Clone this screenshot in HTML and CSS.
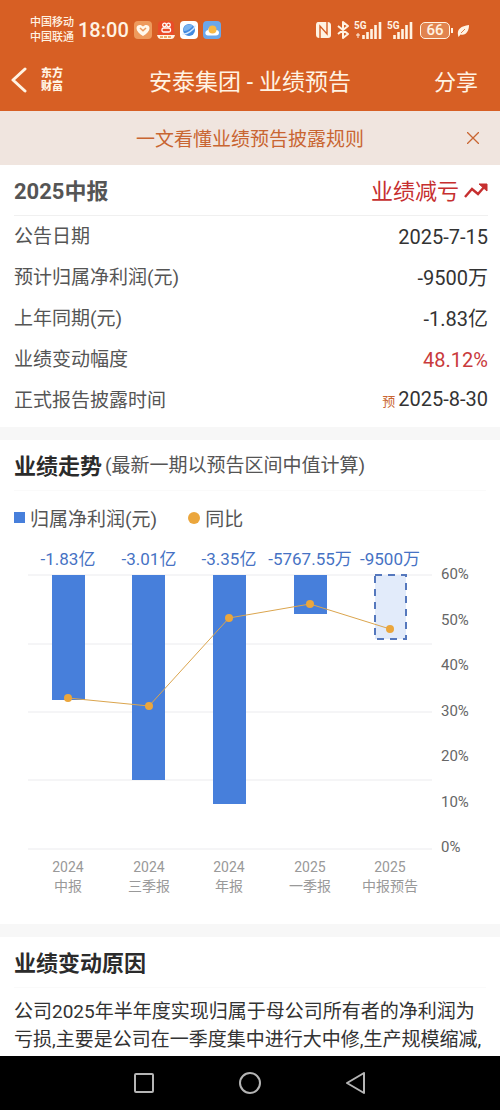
FILE: index.html
```html
<!DOCTYPE html>
<html lang="zh-CN">
<head>
    <meta charset="UTF-8">
    <meta name="viewport" content="width=device-width, initial-scale=1.0">
    <title>安泰集团 - 业绩预告</title>
    <link rel="stylesheet" href="styles.css">
</head>
<body>
    <header class="header">
        <div class="status">
            <div class="carriers">
                <span>中国移动</span>
                <span>中国联通</span>
            </div>
            <span class="clock">18:00</span>
            <div class="apps">
                <svg width="18" height="18" viewBox="0 0 18 18">
                    <rect width="18" height="18" rx="4" fill="#ee9a5c"/>
                    <path d="M9 15C5 12.500 2.500 10 2.500 7.200C2.500 3.600 7 2.800 9 5.600C11 2.800 15.500 3.600 15.500 7.200C15.500 10 13 12.500 9 15Z" fill="#fff8ec"/>
                    <path d="M6 7L9 9.800L12 7" fill="none" stroke="#ee9a5c" stroke-width="1.500"/>
                </svg>
                <svg width="18" height="18" viewBox="0 0 18 18">
                    <rect x="1" width="16" height="17" rx="4" fill="#ea4c28"/>
                    <circle cx="7.500" cy="4" r="1.800" fill="none" stroke="#fff" stroke-width="1.300"/>
                    <circle cx="11.500" cy="4" r="1.800" fill="none" stroke="#fff" stroke-width="1.300"/>
                    <rect x="5" y="7" width="8.500" height="4" rx="1.500" fill="none" stroke="#fff" stroke-width="1.300"/>
                    <path d="M0 14H18C17 17 16 18 14 18H4C2 18 1 17 0 14Z" fill="#fff3e3"/>
                    <path d="M3 16H15" stroke="#e8923f" stroke-width="1.500" stroke-dasharray="3 1"/>
                </svg>
                <svg width="18" height="18" viewBox="0 0 18 18">
                    <rect width="18" height="18" rx="4" fill="#fff"/>
                    <circle cx="9" cy="9" r="6" fill="#438ae0"/>
                    <path d="M3.500 10C7 10 11 8 13 4.500C8 1.500 3 5 3.500 10Z" fill="#79b4f0"/>
                    <path d="M2.500 13C7 13.500 14 9 15.500 4.500" fill="none" stroke="#d5e9ff" stroke-width="1.300"/>
                </svg>
                <svg width="18" height="18" viewBox="0 0 18 18">
                    <rect width="18" height="18" rx="4" fill="#6ba7ea"/>
                    <path d="M5 14.500C1.500 14.500 1.500 9.500 5 9C6 5 12 4.500 13 9C17 9 17 14.500 13 14.500Z" fill="#fff"/>
                    <circle cx="9.500" cy="8.500" r="4" fill="#f9b944"/>
                </svg>
            </div>
            <div class="signals">
                <svg width="17" height="18" viewBox="0 0 17 18">
                    <path d="M3 1H12C15 1 16 2 16 5V14C16 16 15 17 13 17H5C2 17 1 16 1 13V4C1 2 2 1 3 1Z" fill="#fff3e3"/>
                    <path d="M5 17V5L12 13V1" fill="none" stroke="#d75f24" stroke-width="1.400"/>
                </svg>
                <svg width="12" height="18" viewBox="0 0 12 18">
                    <path d="M1 5L11 13L6 17V1L11 5L1 13" fill="none" stroke="#fff3e3" stroke-width="2" stroke-linejoin="round"/>
                </svg>
                <svg class="cell" width="28" height="18" viewBox="0 0 28 18">
                    <text x="0" y="8" class="net">5G</text>
                    <path d="M4 12V17M2 14H6" stroke="#fff3e3" stroke-width="1"/>
                    <path d="M9.500 14V18M13.500 11V18M17.500 8V18M21.500 4V18M26 1V18" stroke="#fff3e3" stroke-width="2.600"/>
                </svg>
                <svg class="cell" width="26" height="18" viewBox="0 0 26 18">
                    <text x="0" y="8" class="net">5G</text>
                    <path d="M7.500 14V18M11.500 11V18M15.500 8V18M19.500 4V18M24 1V18" stroke="#fff3e3" stroke-width="2.600"/>
                </svg>
                <span class="battery">66</span>
                <svg width="13" height="18" viewBox="0 0 13 18">
                    <path d="M1 14C0 8 4 5 12 4C12 10 9 15 3.500 13.500L1.500 16Z" fill="#fff3e3"/>
                    <path d="M4 12L8 8" stroke="#d75f24" stroke-width="0.800"/>
                </svg>
            </div>
        </div>
        <div class="titlebar">
            <div class="left">
                <button class="back" aria-label="返回">
                    <svg width="16" height="26" viewBox="0 0 16 26">
                        <path d="M14 2L2 13L14 24" fill="none" stroke="#fff3e3" stroke-width="3" stroke-linecap="round" stroke-linejoin="round"/>
                    </svg>
                </button>
                <a class="logo" href="#">东方<br>财富</a>
            </div>
            <h1>安泰集团 - 业绩预告</h1>
            <button class="share">分享</button>
        </div>
    </header>

    <main>
        <div class="banner">
            <a href="#">一文看懂业绩预告披露规则</a>
            <button class="close" aria-label="关闭">
                <svg width="12" height="12" viewBox="0 0 12 12">
                    <path d="M0 0L12 12M12 0L0 12" stroke="#c96532" stroke-width="1.300"/>
                </svg>
            </button>
        </div>

        <section class="summary">
            <div class="summary-head">
                <h2>2025中报</h2>
                <span class="trend">业绩减亏
                    <svg width="24" height="18" viewBox="0 0 24 18">
                        <path d="M1 17L8 9L14 14L21 6" fill="none" stroke="#c62f2f" stroke-width="2.400"/>
                        <path d="M15 4H23V11Z" fill="#c62f2f" stroke="#c62f2f" stroke-width="1"/>
                    </svg>
                </span>
            </div>
            <table>
                <tr><th scope="row">公告日期</th><td>2025-7-15</td></tr>
                <tr><th scope="row">预计归属净利润(元)</th><td>-9500万</td></tr>
                <tr><th scope="row">上年同期(元)</th><td>-1.83亿</td></tr>
                <tr><th scope="row">业绩变动幅度</th><td class="red">48.12%</td></tr>
                <tr><th scope="row">正式报告披露时间</th><td><small>预</small>2025-8-30</td></tr>
            </table>
        </section>

        <section class="history">
            <div class="section-head">
                <h2>业绩走势</h2>
                <span>(最新一期以预告区间中值计算)</span>
            </div>
            <div class="legend">
                <span><i class="square"></i>归属净利润(元)</span>
                <span><i class="dot"></i>同比</span>
            </div>
            <svg class="chart" viewBox="0 0 500 364">
                <path class="grid" d="M28 35H432M28 104H432M28 172H432M28 240H432M28 309H432"/>
                <g class="bars">
                    <rect x="52" y="35" width="33" height="125"/>
                    <rect x="132" y="35" width="33" height="205"/>
                    <rect x="213" y="35" width="33" height="229"/>
                    <rect x="294" y="35" width="33" height="39"/>
                    <rect class="forecast" x="375" y="35" width="31" height="64"/>
                </g>
                <polyline class="line" points="68,158 149,166 229,78 310,64 390,89"/>
                <g class="points">
                    <circle cx="68" cy="158" r="4"/>
                    <circle cx="149" cy="166" r="4"/>
                    <circle cx="229" cy="78" r="4"/>
                    <circle cx="310" cy="64" r="4"/>
                    <circle cx="390" cy="89" r="4"/>
                </g>
                <g class="values">
                    <text x="68" y="25">-1.83亿</text>
                    <text x="149" y="25">-3.01亿</text>
                    <text x="229" y="25">-3.35亿</text>
                    <text x="310" y="25">-5767.55万</text>
                    <text x="390" y="25">-9500万</text>
                </g>
                <g class="percents">
                    <text x="441" y="39">60%</text>
                    <text x="441" y="85">50%</text>
                    <text x="441" y="130">40%</text>
                    <text x="441" y="176">30%</text>
                    <text x="441" y="221">20%</text>
                    <text x="441" y="267">10%</text>
                    <text x="441" y="312">0%</text>
                </g>
                <g class="periods">
                    <text x="68" y="332">2024</text>
                    <text x="68" y="351">中报</text>
                    <text x="149" y="332">2024</text>
                    <text x="149" y="351">三季报</text>
                    <text x="229" y="332">2024</text>
                    <text x="229" y="351">年报</text>
                    <text x="310" y="332">2025</text>
                    <text x="310" y="351">一季报</text>
                    <text x="390" y="332">2025</text>
                    <text x="390" y="351">中报预告</text>
                </g>
            </svg>
        </section>

        <section class="reason">
            <div class="section-head">
                <h2>业绩变动原因</h2>
            </div>
            <p>公司2025年半年度实现归属于母公司所有者的净利润为亏损,主要是公司在一季度集中进行大中修,生产规模缩减,</p>
        </section>
    </main>

    <nav class="navbar">
        <button aria-label="最近任务">
            <svg width="22" height="22" viewBox="0 0 22 22"><rect x="2" y="2" width="18" height="18" rx="1"/></svg>
        </button>
        <button aria-label="主屏幕">
            <svg width="22" height="22" viewBox="0 0 22 22"><circle cx="11" cy="11" r="10"/></svg>
        </button>
        <button aria-label="后退">
            <svg width="22" height="22" viewBox="0 0 22 22"><path d="M19 1V21L2 11Z"/></svg>
        </button>
    </nav>
</body>
</html>
```
FILE: styles.css
```css
* {
    box-sizing: border-box;
}
body {
    margin: 0;
    height: 100vh;
    display: flex;
    flex-direction: column;
    font-family: Roboto, "Noto Sans CJK SC", sans-serif;
    font-size: 19px;
    color: #333;
    background: #fff;
}
button {
    padding: 0;
    border: none;
    background: none;
    color: inherit;
    font: inherit;
    cursor: pointer;
}
a {
    color: inherit;
    text-decoration: none;
}
svg {
    display: block;
}
h1, h2, p {
    margin: 0;
}

/* header */
.header {
    background: #d75f24;
    color: #fff3e3;
    padding-top: 14px;
}
.status {
    display: flex;
    align-items: center;
    height: 32px;
    padding: 0 30px;
}
.carriers {
    display: flex;
    flex-direction: column;
    font-size: 11px;
    font-weight: 500;
    line-height: 15px;
}
.clock {
    margin: 0 5px 0 4px;
    font-size: 20px;
    font-weight: 500;
}
.apps {
    display: flex;
    gap: 5px;
}
.signals {
    display: flex;
    align-items: center;
    gap: 5px;
    margin-left: auto;
}
.net {
    font-size: 10px;
    font-weight: 700;
    fill: #fff3e3;
}
.battery {
    position: relative;
    width: 30px;
    margin: 0 2px;
    border: 1px solid #fff3e3;
    border-radius: 5px;
    background: #e1844f;
    font-size: 15px;
    font-weight: 500;
    line-height: 15px;
    text-align: center;
}
.battery::after {
    content: "";
    position: absolute;
    right: -4px;
    top: 5px;
    width: 2px;
    height: 5px;
    background: #fff3e3;
}
.titlebar {
    display: grid;
    grid-template-columns: 1fr auto 1fr;
    align-items: center;
    height: 65px;
    padding: 3px 11px 0;
}
.left {
    display: flex;
    align-items: center;
    gap: 14px;
}
.logo {
    font-family: "Liberation Serif", "Noto Sans CJK SC", serif;
    font-size: 11px;
    font-weight: 900;
    line-height: 13px;
}
h1 {
    font-size: 23px;
    font-weight: 400;
}
.share {
    justify-self: end;
    padding: 0 11px;
    font-size: 22px;
}

/* content */
main {
    flex: 1;
    overflow: hidden;
}
.banner {
    display: grid;
    grid-template-columns: 1fr auto 1fr;
    align-items: center;
    height: 54px;
    padding: 0 21px;
    background: #f0e5df;
    color: #c96532;
}
.banner a {
    grid-column: 2;
    padding-bottom: 2px;
}
.close {
    justify-self: end;
}
h2 {
    font-size: 22px;
    font-weight: 700;
}
.summary {
    padding: 0 12px 6px 14px;
}
.summary-head {
    display: flex;
    align-items: center;
    justify-content: space-between;
    height: 51px;
    padding-bottom: 3px;
    border-bottom: 1px solid #f0f0f0;
    color: #555;
}
.trend {
    display: flex;
    align-items: center;
    gap: 5px;
    font-size: 22px;
    color: #c62f2f;
}
table {
    width: 100%;
    border-collapse: collapse;
}
th, td {
    height: 41px;
    padding: 0;
    line-height: 24px;
}
th {
    font-weight: 400;
    text-align: left;
    color: #555;
}
td {
    font-size: 20px;
    text-align: right;
}
small {
    margin-right: 3px;
    font-size: 13px;
    color: #c96532;
}
.red {
    color: #c93a3c;
}
.history, .reason {
    border-top: 13px solid #f7f7f7;
}
.section-head {
    display: flex;
    align-items: center;
    gap: 3px;
    height: 51px;
    margin: 0 14px;
    padding-bottom: 3px;
    border-bottom: 1px solid #fafafa;
    color: #555;
}
.section-head h2 {
    color: #2b2b2b;
}
.legend {
    display: flex;
    align-items: center;
    gap: 31px;
    height: 49px;
    padding: 4px 14px 0;
    color: #555;
}
.legend span {
    display: flex;
    align-items: center;
    gap: 5px;
}
.square {
    width: 11px;
    height: 11px;
    background: #477fdb;
}
.dot {
    width: 12px;
    height: 12px;
    border-radius: 50%;
    background: #eba63c;
}

/* chart */
.chart {
    width: 100%;
    margin-bottom: 20px;
}
.grid {
    stroke: #ebebee;
}
.bars {
    fill: #477fdb;
}
.forecast {
    fill: #e2ebfa;
    stroke: #5578bd;
    stroke-width: 2;
    stroke-dasharray: 7 6;
}
.line {
    fill: none;
    stroke: #dba54e;
    stroke-width: 1;
}
.points {
    fill: #eba63c;
}
.values {
    font-size: 17px;
    fill: #4672c4;
    text-anchor: middle;
}
.percents {
    font-size: 15px;
    fill: #666;
}
.periods {
    font-size: 14px;
    fill: #999;
    text-anchor: middle;
}
.reason p {
    padding: 10px 14px 0;
    line-height: 28px;
}

/* system buttons */
.navbar {
    display: flex;
    justify-content: center;
    align-items: center;
    gap: 84px;
    height: 54px;
    background: #000;
}
.navbar svg {
    fill: none;
    stroke: #b5b5b5;
    stroke-width: 2;
    stroke-linejoin: round;
}
```
